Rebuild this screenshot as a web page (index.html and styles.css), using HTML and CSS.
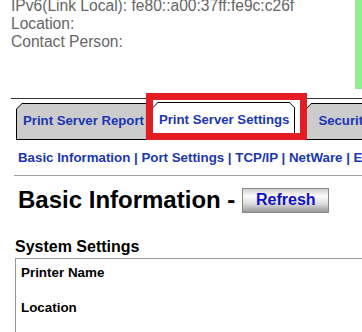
FILE: index.html
```html
<!doctype html>
<html>
<head>
<meta charset="UTF-8">
<title>Print Server Settings</title>
<link rel="stylesheet" href="styles.css">
</head>
<body>
<div class="top">
  <div class="info">
    IPv6(Link Local): fe80::a00:37ff:fe9c:c26f<br>
    Location:<br>
    Contact Person:
  </div>
  <div class="status"></div>
</div>

<div class="tabbar">
  <div class="tab"><span>Print Server Report</span></div>
  <div class="tab active"><span>Print Server Settings</span></div>
  <div class="tab last"><span>Security</span></div>
</div>
<div class="mark"></div>

<div class="subnav">
  <a href="#">Basic Information</a> | <a href="#">Port Settings</a> | <a href="#">TCP/IP</a> | <a href="#">NetWare</a> | <a href="#">E-mail</a>
</div>
<div class="rule"></div>

<div class="heading">
  <h1>Basic Information -</h1>
  <button class="refresh">Refresh</button>
</div>

<h2>System Settings</h2>
<div class="box">
  <div class="row">Printer Name</div>
  <div class="row">Location</div>
</div>
</body>
</html>
```

FILE: styles.css
```css
html, body {
	margin:0;
	overflow:hidden;
	background:#fff;
	font-family:"Liberation Sans", Arial, sans-serif;
}

.top {
	display:flex;
	justify-content:space-between;
	height:89px;
}

.info {
	margin-top:-3px;
	padding-left:11px;
	font-size:15.6px;
	line-height:18px;
	color:#666;
	white-space:nowrap;
}

.status {
	width:7px;
	height:89px;
	background:#90ee90;
}

/* tabs */
.tabbar {
	display:flex;
	margin:9px 0 0 11px;
	padding:4px 0 0 5px;
	border-top:1px solid #333;
	white-space:nowrap;
}

.tab {
	height:35px;
	padding:1px;
	margin-right:5px;
	background:#000;
	clip-path:polygon(6px 0, 100% 0, 100% 100%, 0 100%, 0 6px);
}

.tab span {
	display:block;
	height:100%;
	box-sizing:border-box;
	padding:0 2px 0 6px;
	background:#ccc;
	color:#1c36b4;
	font-weight:bold;
	font-size:13.2px;
	line-height:33px;
	clip-path:polygon(5px 0, 100% 0, 100% 100%, 0 100%, 0 5px);
}

.tab.active {
	margin-top:-1px;
	height:36px;
	clip-path:polygon(6px 0, calc(100% - 6px) 0, 100% 6px, 100% 100%, 0 100%, 0 6px);
}

.tab.active span {
	background:#fff;
	padding:0 5px 0 6px;
	clip-path:polygon(5px 0, calc(100% - 5px) 0, 100% 5px, 100% 100%, 0 100%, 0 5px);
}

.tab.last {
	margin-left:5px;
}

.tab.last span {
	padding-left:12px;
}

/* annotation */
.mark {
	position:absolute;
	left:146px;
	top:93px;
	width:147px;
	height:33px;
	border:7px solid #e41c23;
}

.subnav {
	margin-top:10px;
	padding-left:18px;
	font-size:13.3px;
	line-height:15px;
	font-weight:bold;
	color:#1c36b4;
	white-space:nowrap;
}

.subnav a {
	color:#1c36b4;
	text-decoration:none;
}

.rule {
	margin:10px 0 0 14px;
	border-top:1px solid #a0a0a0;
}

.heading {
	display:flex;
	align-items:center;
	margin-top:10px;
	padding-left:18px;
}

h1 {
	margin:0 7px 0 0;
	font-size:24px;
	line-height:28px;
	color:#000;
}

.refresh {
	width:87px;
	height:25px;
	border:1px solid #888;
	background:linear-gradient(#cfcfcf, #fafafa 30%, #e2e2e2 60%, #9a9a9a);
	color:#1010c8;
	font-family:"Liberation Sans", Arial, sans-serif;
	font-weight:bold;
	font-size:16px;
	padding:0;
}

h2 {
	margin:24px 0 0 15px;
	font-size:16px;
	line-height:18px;
	color:#000;
}

.box {
	margin:2px 0 0 15px;
	border:1px solid #999;
	border-right:none;
	height:100px;
	padding:6px 0 0 5px;
}

.row {
	font-size:13.4px;
	font-weight:bold;
	line-height:16px;
	height:35px;
}
```
